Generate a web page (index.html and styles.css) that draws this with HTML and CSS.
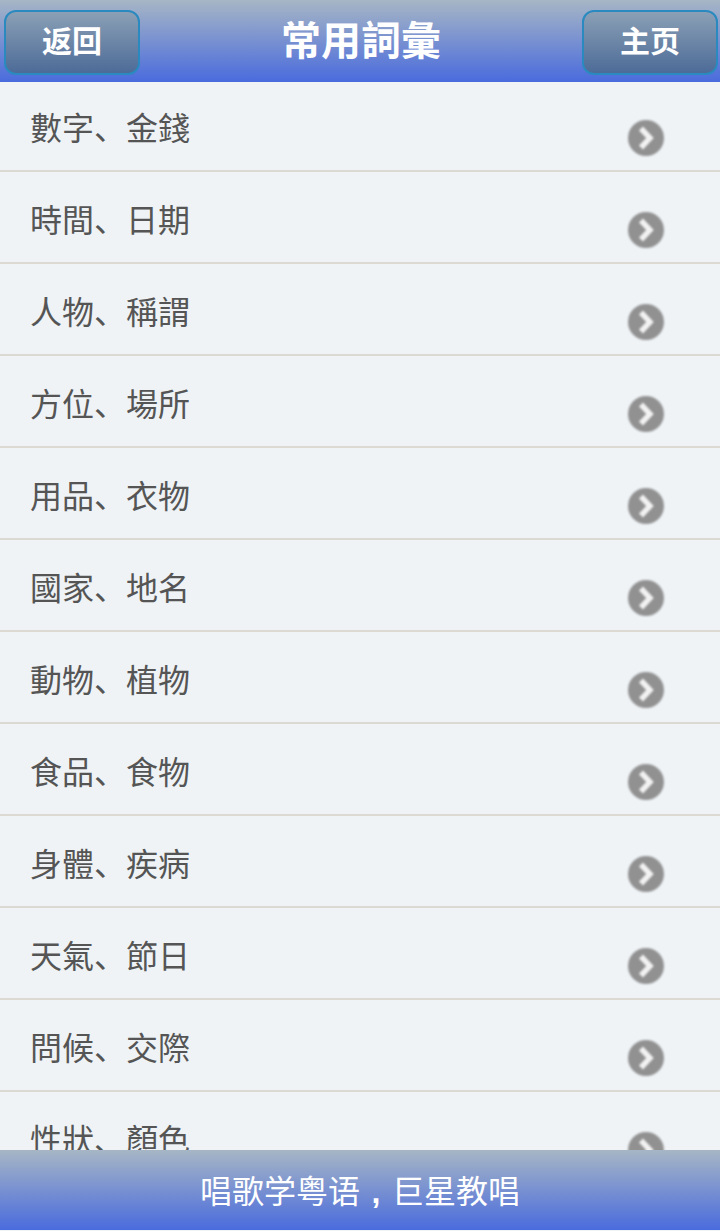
FILE: index.html
```html
<!DOCTYPE html>
<html>
    <head>
        <title>常用詞彙</title>
        <meta charset="utf-8"/>
        <link rel="stylesheet" href="styles.css">
    </head>
    <body class="body">
        <header class="header">
            <a class="btn">返回</a>
            <h1 class="title">常用詞彙</h1>
            <a class="btn">主页</a>
        </header>
        <svg width="0" height="0" class="defs">
            <symbol id="arrow" viewBox="0 0 36 36">
                <circle cx="18" cy="18" r="18" fill="#919191"/>
                <path d="M13 8.5 L22 18 L13 27.5" fill="none" stroke="#f2f2f2" stroke-width="5.5"/>
            </symbol>
        </svg>
        <ul class="list">
            <li class="row"><span>數字、金錢</span><svg class="arrow"><use href="#arrow"/></svg></li>
            <li class="row"><span>時間、日期</span><svg class="arrow"><use href="#arrow"/></svg></li>
            <li class="row"><span>人物、稱謂</span><svg class="arrow"><use href="#arrow"/></svg></li>
            <li class="row"><span>方位、場所</span><svg class="arrow"><use href="#arrow"/></svg></li>
            <li class="row"><span>用品、衣物</span><svg class="arrow"><use href="#arrow"/></svg></li>
            <li class="row"><span>國家、地名</span><svg class="arrow"><use href="#arrow"/></svg></li>
            <li class="row"><span>動物、植物</span><svg class="arrow"><use href="#arrow"/></svg></li>
            <li class="row"><span>食品、食物</span><svg class="arrow"><use href="#arrow"/></svg></li>
            <li class="row"><span>身體、疾病</span><svg class="arrow"><use href="#arrow"/></svg></li>
            <li class="row"><span>天氣、節日</span><svg class="arrow"><use href="#arrow"/></svg></li>
            <li class="row"><span>問候、交際</span><svg class="arrow"><use href="#arrow"/></svg></li>
            <li class="row"><span>性狀、顏色</span><svg class="arrow"><use href="#arrow"/></svg></li>
        </ul>
        <footer class="footer">唱歌学粤语<span class="comma">,</span>巨星教唱</footer>
    </body>
</html>
```

FILE: styles.css
```css
html{
    height:100%;
    overflow:hidden;
}
.body{
    margin:0;
    height:100%;
    overflow:hidden;
    background-color:#eff3f6;
    font-family:"Liberation Sans","Noto Sans CJK SC",sans-serif;
}
.defs{
    display:block;
}
.header{
    height:82px;
    box-sizing:border-box;
    padding:10px 2px 0 4px;
    display:flex;
    justify-content:space-between;
    align-items:flex-start;
    background:linear-gradient(#a6b6c5,#4a6bdd);
}
.title{
    margin:0;
    font-size:40px;
    line-height:62px;
    color:#fff;
    font-weight:bold;
}
.btn{
    width:136px;
    height:65px;
    box-sizing:border-box;
    border:2px solid #2a8abf;
    border-radius:12px;
    background:linear-gradient(#8ba0b6,#4c6b97);
    color:#fff;
    font-size:30px;
    font-weight:bold;
    line-height:60px;
    text-align:center;
}
.list{
    list-style:none;
    margin:-2px 0 0;
    padding:0;
}
.row{
    height:90px;
    border-bottom:2px solid #dcd9d3;
    padding:0 56px 0 30px;
    display:flex;
    justify-content:space-between;
    align-items:flex-start;
    font-size:32px;
    line-height:46px;
    color:#555;
}
.row span{
    margin-top:26px;
}
.arrow{
    width:36px;
    height:36px;
    margin-top:40px;
    filter:blur(0.9px);
}
.footer{
    position:fixed;
    left:0;
    right:0;
    top:1150px;
    height:80px;
    background:linear-gradient(#a6b6c5,#4a6bdd);
    color:#fff;
    font-size:32px;
    line-height:84px;
    text-align:center;
}
.comma{
    display:inline-block;
    width:32px;
    font-weight:bold;
}
```
